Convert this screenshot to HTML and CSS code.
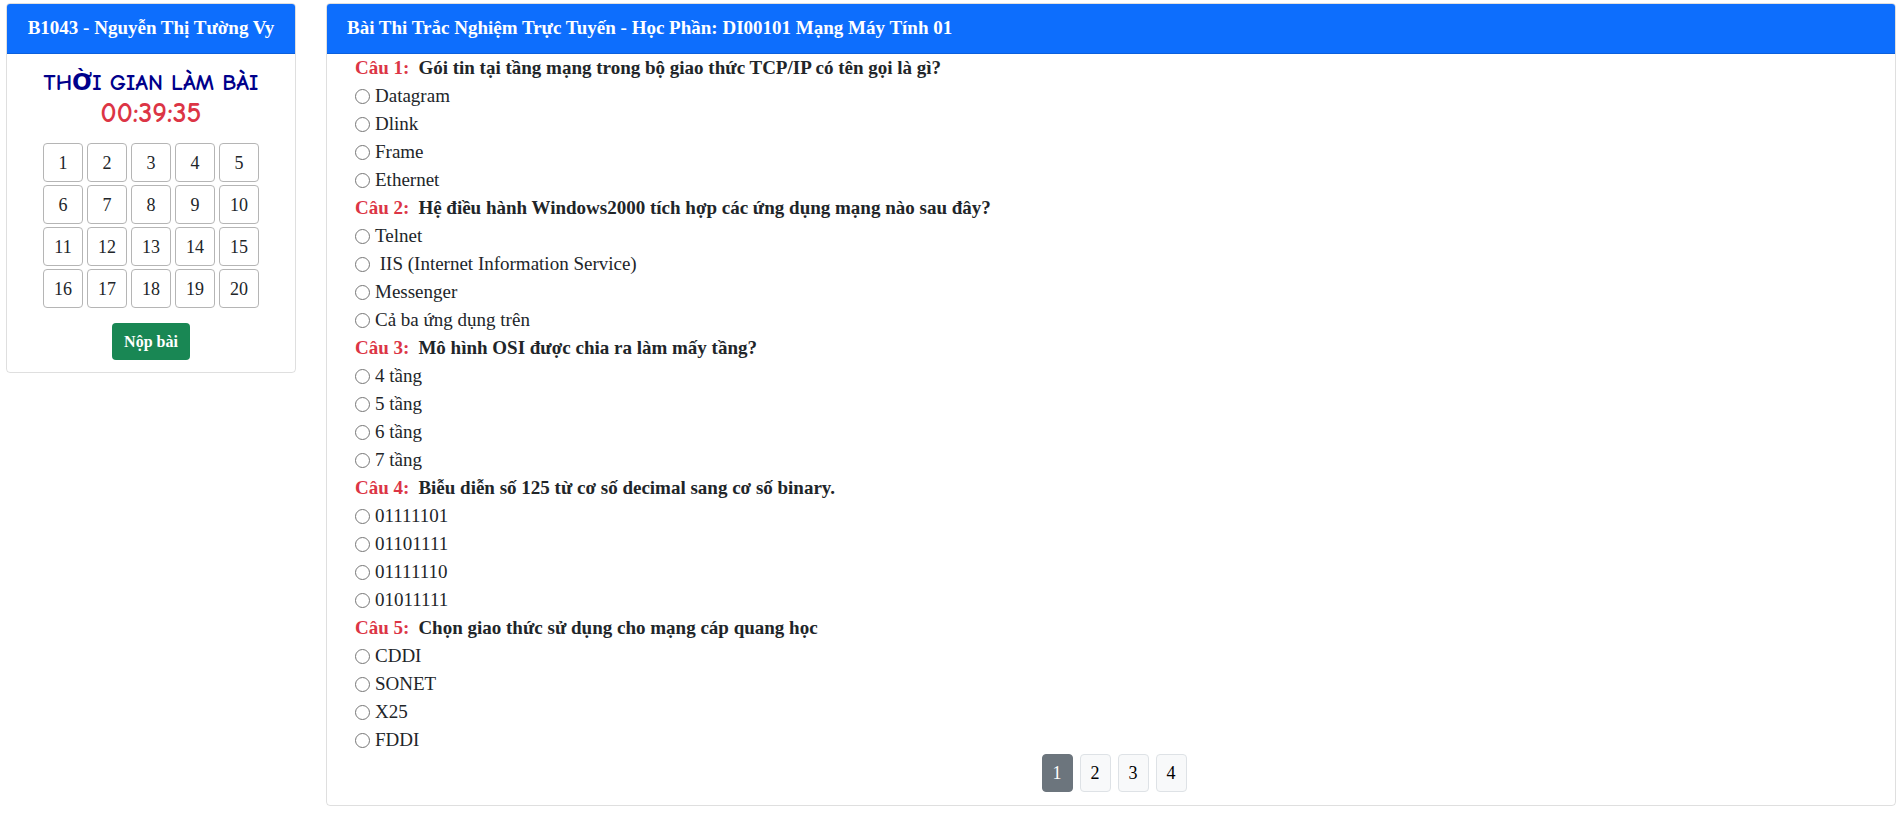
FILE: index.html
```html
<!DOCTYPE html>
<html lang="vi">
<head>
<meta charset="utf-8">
<meta name="viewport" content="width=device-width, initial-scale=1">
<title>Bài Thi Trắc Nghiệm Trực Tuyến</title>
<link rel="stylesheet" href="styles.css">
</head>
<body>
<div class="page">
  <aside class="card sidebar">
    <h1 class="card-header student">B1043 - Nguyễn Thị Tường Vy</h1>
    <div class="timer">
      <h2 class="timer-title">THỜI GIAN LÀM BÀI</h2>
      <time class="timer-value">00:39:35</time>
    </div>
    <nav class="numbers" aria-label="Danh sách câu hỏi">
      <button type="button">1</button><button type="button">2</button><button type="button">3</button><button type="button">4</button><button type="button">5</button>
      <button type="button">6</button><button type="button">7</button><button type="button">8</button><button type="button">9</button><button type="button">10</button>
      <button type="button">11</button><button type="button">12</button><button type="button">13</button><button type="button">14</button><button type="button">15</button>
      <button type="button">16</button><button type="button">17</button><button type="button">18</button><button type="button">19</button><button type="button">20</button>
    </nav>
    <button type="submit" form="exam" class="submit">Nộp bài</button>
  </aside>
  <main class="card exam">
    <h2 class="card-header">Bài Thi Trắc Nghiệm Trực Tuyến - Học Phần: DI00101 Mạng Máy Tính 01</h2>
    <form id="exam" class="questions">
      <fieldset>
        <legend><span class="label">Câu 1:</span>Gói tin tại tầng mạng trong bộ giao thức TCP/IP có tên gọi là gì?</legend>
        <label><input type="radio" name="q1">Datagram</label>
        <label><input type="radio" name="q1">Dlink</label>
        <label><input type="radio" name="q1">Frame</label>
        <label><input type="radio" name="q1">Ethernet</label>
      </fieldset>
      <fieldset>
        <legend><span class="label">Câu 2:</span>Hệ điều hành Windows2000 tích hợp các ứng dụng mạng nào sau đây?</legend>
        <label><input type="radio" name="q2">Telnet</label>
        <label><input type="radio" name="q2">&nbsp;IIS (Internet Information Service)</label>
        <label><input type="radio" name="q2">Messenger</label>
        <label><input type="radio" name="q2">Cả ba ứng dụng trên</label>
      </fieldset>
      <fieldset>
        <legend><span class="label">Câu 3:</span>Mô hình OSI được chia ra làm mấy tầng?</legend>
        <label><input type="radio" name="q3">4 tầng</label>
        <label><input type="radio" name="q3">5 tầng</label>
        <label><input type="radio" name="q3">6 tầng</label>
        <label><input type="radio" name="q3">7 tầng</label>
      </fieldset>
      <fieldset>
        <legend><span class="label">Câu 4:</span>Biễu diễn số 125 từ cơ số decimal sang cơ số binary.</legend>
        <label><input type="radio" name="q4">01111101</label>
        <label><input type="radio" name="q4">01101111</label>
        <label><input type="radio" name="q4">01111110</label>
        <label><input type="radio" name="q4">01011111</label>
      </fieldset>
      <fieldset>
        <legend><span class="label">Câu 5:</span>Chọn giao thức sử dụng cho mạng cáp quang học</legend>
        <label><input type="radio" name="q5">CDDI</label>
        <label><input type="radio" name="q5">SONET</label>
        <label><input type="radio" name="q5">X25</label>
        <label><input type="radio" name="q5">FDDI</label>
      </fieldset>
    </form>
    <nav class="pages" aria-label="Trang">
      <button type="button" class="active" aria-current="page">1</button>
      <button type="button">2</button>
      <button type="button">3</button>
      <button type="button">4</button>
    </nav>
  </main>
</div>
</body>
</html>
```
FILE: styles.css
```css
*, *::before, *::after {
  box-sizing: border-box;
}

body {
  margin: 0;
  background: #fff;
  color: #212529;
  font: 19px/28px "Liberation Serif", "Times New Roman", serif;
}

button {
  font: inherit;
  cursor: pointer;
}

.page {
  display: flex;
  align-items: flex-start;
  gap: 30px;
  padding: 3px 6px 8px;
}

.card {
  display: flex;
  flex-direction: column;
  border: 1px solid rgba(0, 0, 0, 0.125);
  border-radius: 4px;
}

.card-header {
  margin: 0;
  padding: 10px 20px 11px;
  border-bottom: 1px solid rgba(0, 0, 0, 0.125);
  border-radius: 3px 3px 0 0;
  background: #0d6efd;
  color: #fff;
  font-size: 19px;
  font-weight: bold;
}

.sidebar {
  flex: 0 0 290px;
  align-items: center;
  padding-bottom: 12px;
}

.student {
  align-self: stretch;
  padding-right: 0;
  padding-left: 0;
  text-align: center;
  white-space: nowrap;
}

.timer {
  padding: 13px 0 14px;
  font-family: "Comic Sans MS", "Comic Neue", "DejaVu Sans", sans-serif;
  line-height: 31px;
  font-weight: bold;
  text-align: center;
}

.timer-title {
  margin: 0;
  color: #00008b;
  font-size: 23px;
}

.timer-value {
  display: block;
  color: #dc3545;
  font-size: 28px;
}

.numbers {
  display: grid;
  grid-template-columns: repeat(5, 40px);
  gap: 3px 4px;
}

.numbers button {
  height: 39px;
  padding: 0;
  border: 1px solid #b5b5b5;
  border-radius: 4px;
  background: #fff;
  color: #212529;
  font-size: 18px;
}

.submit {
  margin-top: 15px;
  padding: 5px 12px 4px;
  border: 0;
  border-radius: 4px;
  background: #198754;
  color: #fff;
  font-size: 16px;
  font-weight: bold;
}

.exam {
  flex: 1;
  min-width: 0;
  padding-bottom: 13px;
}

.questions {
  padding-left: 28px;
}

.questions fieldset {
  min-width: 0;
  margin: 0;
  padding: 0;
  border: 0;
}

.questions legend {
  padding: 0;
  font-weight: bold;
}

.questions .label {
  margin-right: 9px;
  color: #dc3545;
}

.questions label {
  display: flex;
  align-items: center;
  gap: 5px;
}

.questions input {
  width: 15px;
  height: 15px;
  margin: 0;
}

.pages {
  display: flex;
  justify-content: center;
  gap: 7px;
  padding-left: 6px;
}

.pages button {
  width: 31px;
  height: 38px;
  padding: 0;
  border: 1px solid #dee2e6;
  border-radius: 4px;
  background: #f8f9fa;
  color: #000;
  font-size: 18px;
}

.pages .active {
  border-color: #6c757d;
  background: #6c757d;
  color: #fff;
}
```
